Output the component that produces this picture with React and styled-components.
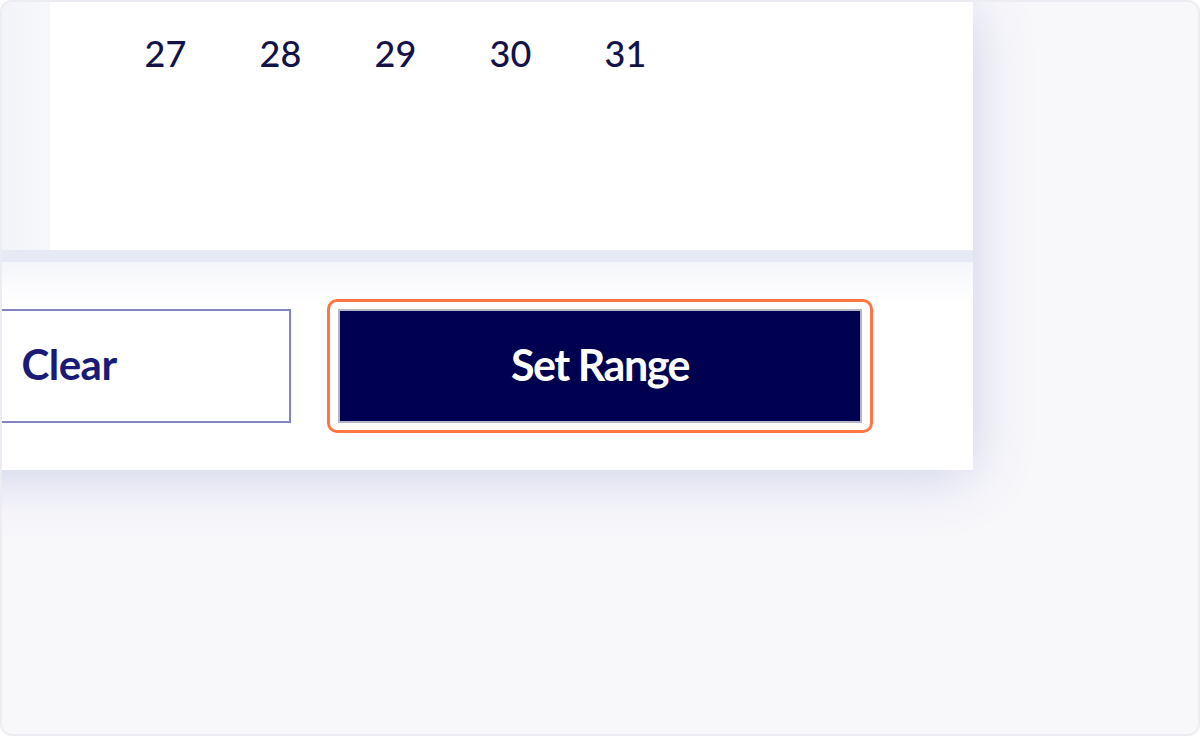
import React from "react";
import styled, { createGlobalStyle } from "styled-components";

const Global = createGlobalStyle`
  html, body { margin: 0; padding: 0; background: #ffffff; }
  body { font-family: Lato, "Open Sans", "Liberation Sans", sans-serif; }
  * { box-sizing: border-box; }
`;

const Frame = styled.div`
  width: 1200px;
  height: 736px;
  border: 2px solid #ececf2;
  border-radius: 12px;
  background: #f8f8fb;
  overflow: hidden;
`;

const Card = styled.div`
  margin-left: -255px;
  width: 1226px;
  height: 468px;
  display: grid;
  grid-template-rows: 248px 12px 1fr;
  background: #ffffff;
  box-shadow: 0 6px 56px rgba(60, 70, 170, 0.22);
`;

const CalendarRow = styled.div`
  display: flex;
`;

const SidePanel = styled.div`
  width: 303px;
  flex: none;
  background: linear-gradient(to right, #f3f4f9 85%, #f7f8fb);
`;

const Days = styled.div`
  flex: 1;
  display: grid;
  grid-template-columns: repeat(7, 115px);
  align-content: start;
  padding: 31px 0 0 58px;
`;

const Day = styled.div`
  height: 40px;
  line-height: 40px;
  text-align: center;
  font-family: Lato, "Open Sans", sans-serif;
  font-size: 36px;
  font-weight: 500;
  color: #13134a;
`;

const Divider = styled.div`
  background: #e7e9f5;
`;

const Footer = styled.div`
  display: flex;
  align-items: center;
  justify-content: flex-end;
  gap: 36px;
  padding: 0 100px;
  background: linear-gradient(#f5f6fa, #ffffff 44px);
`;

const OutlineButton = styled.button`
  width: 444px;
  height: 114px;
  background: #ffffff;
  border: 2px solid #8284c6;
  border-radius: 0;
  font-family: Lato, "Open Sans", sans-serif;
  font-size: 42px;
  font-weight: 700;
  color: #1a1a78;
  letter-spacing: -0.5px;
  padding: 0 0 4px 0;
`;

const FocusRing = styled.div`
  border: 3px solid #ff7444;
  border-radius: 10px;
  padding: 7px 8px;
  background: #ffffff;
  display: flex;
`;

const PrimaryButton = styled.button`
  width: 524px;
  height: 114px;
  background: #000050;
  border: 2px solid #b5b6c4;
  border-radius: 0;
  font-family: Lato, "Open Sans", sans-serif;
  font-size: 43px;
  font-weight: 700;
  color: #ffffff;
  letter-spacing: -1.5px;
  padding: 0 0 4px 0;
`;

const days = ["27", "28", "29", "30", "31", "", ""];

export default function App() {
  return (
    <>
      <Global />
      <Frame>
        <Card>
          <CalendarRow>
            <SidePanel />
            <Days>
              {days.map((d, i) => (
                <Day key={i}>{d}</Day>
              ))}
            </Days>
          </CalendarRow>
          <Divider />
          <Footer>
            <OutlineButton>Clear</OutlineButton>
            <FocusRing>
              <PrimaryButton>Set Range</PrimaryButton>
            </FocusRing>
          </Footer>
        </Card>
      </Frame>
    </>
  );
}
